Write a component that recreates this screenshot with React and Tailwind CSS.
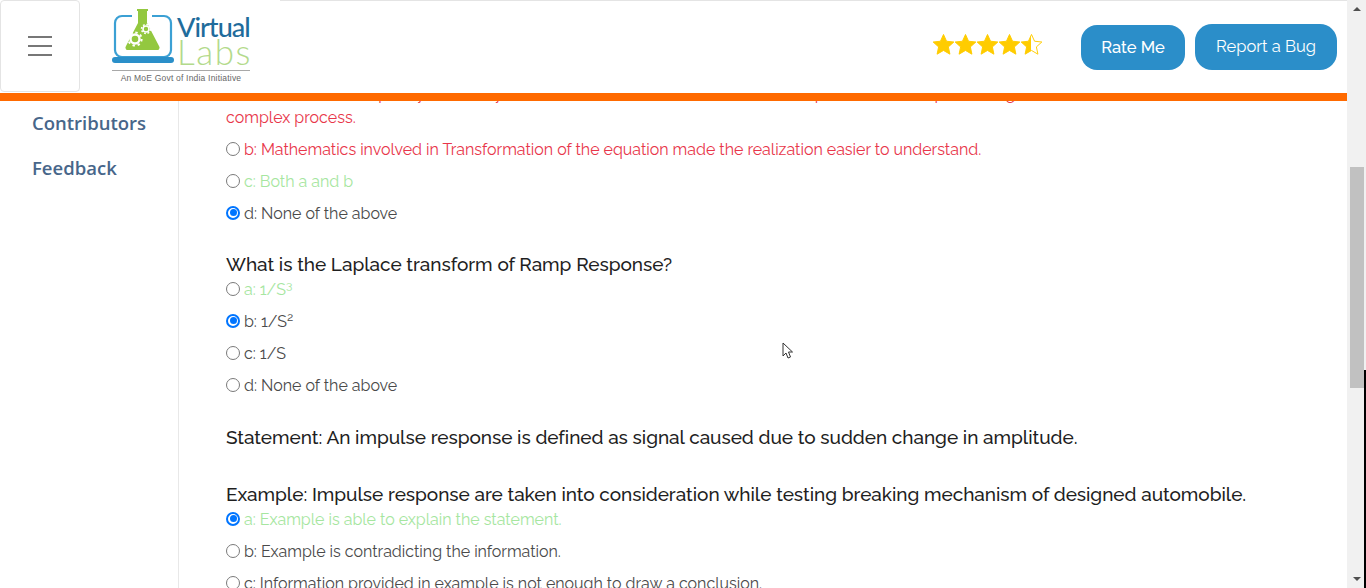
import React from "react";

const sans = "font-['Raleway','Lato','Open_Sans',sans-serif]";

const Radio = ({ checked }) => (
  <span
    className={`inline-block w-[14px] h-[14px] rounded-full shrink-0 mr-[4px] -mt-[3px] bg-white border ${
      checked ? "border-[#0075ff] border-2 p-[1.5px]" : "border-[#7a7a7a]"
    }`}
  >
    {checked && <span className="block w-full h-full rounded-full bg-[#0075ff]" />}
  </span>
);

const Option = ({ checked, color = "text-[#4a4a4a]", children }) => (
  <div className={`flex items-center h-[32px] text-[16px] tracking-[-0.02px] oldstyle-nums ${color}`}>
    <Radio checked={checked} />
    <span>{children}</span>
  </div>
);

const Question = ({ className, children }) => (
  <div className={`text-[19px] leading-[26px] tracking-[-0.05px] text-[#1f1f1f] font-medium ${className}`}>{children}</div>
);

const Star = ({ half }) => (
  <svg viewBox="0 0 24 24" className="w-[23px] h-[23px] -mx-[0.5px]">
    <defs>
      <linearGradient id="halfStar">
        <stop offset="50%" stopColor="#ffcc00" />
        <stop offset="50%" stopColor="#ffffff" />
      </linearGradient>
    </defs>
    <path
      d="M12 1.5l3.2 7.1 7.6.8-5.7 5.1 1.6 7.6L12 18.2l-6.7 3.9 1.6-7.6-5.7-5.1 7.6-.8z"
      fill={half ? "url(#halfStar)" : "#ffcc00"}
      stroke="#ffcc00"
      strokeWidth="1"
    />
  </svg>
);

const Logo = () => (
  <div className="w-[200px] shrink-0 pl-[32px] pt-[8px]">
    <div className="flex flex-col w-[138px]">
      <div className="flex items-start">
        <svg viewBox="0 0 66 56" className="w-[66px] h-[56px] shrink-0">
          <path d="M20 8H10a7 7 0 0 0-7 7v27a7 7 0 0 0 7 7h42a7 7 0 0 0 7-7V15a7 7 0 0 0-7-7H40" fill="none" stroke="#3ba0d4" strokeWidth="2.2" />
          <rect x="0" y="49" width="62" height="6" rx="3" fill="#2a8fc9" />
          <path d="M25 1h11v2h-1v12l12 23a2.5 2.5 0 0 1-2.5 4h-28a2.5 2.5 0 0 1-2.5-4l12-23V3h-1z" fill="#93c83f" />
          <circle cx="23" cy="31" r="4.5" fill="none" stroke="#fff" strokeWidth="2.4" />
          <circle cx="23" cy="31" r="6.6" fill="none" stroke="#fff" strokeWidth="2" strokeDasharray="2.4 2.8" />
          <circle cx="34" cy="21" r="3" fill="none" stroke="#fff" strokeWidth="1.6" />
          <circle cx="34" cy="21" r="4.5" fill="none" stroke="#fff" strokeWidth="1.5" strokeDasharray="1.8 1.7" />
        </svg>
        <div className="flex flex-col font-['Lato',sans-serif] -ml-[1px]">
          <span className="text-[27px] leading-[22px] mt-[8px] tracking-[-1px] text-[#1f6c9c] font-medium">Virtual</span>
          <span className="text-[35px] leading-[26px] text-[#b3da8b] font-light tracking-[1.5px]">Labs</span>
        </div>
      </div>
      <div className="border-t border-[#a8a8a8] mt-[6px] text-[8.5px] leading-[12px] text-center text-[#666] font-['Liberation_Sans',sans-serif] tracking-[0.2px] pt-[1px]">
        An MoE Govt of India Initiative
      </div>
    </div>
  </div>
);

export default function App() {
  return (
    <div className={`flex h-[588px] overflow-hidden bg-white ${sans}`}>
      <div className="flex-1 min-w-0 flex flex-col">
        <header className="h-[101px] shrink-0 flex border-b-8 border-[#ff6a00] relative z-10 bg-white">
          <button className="w-[80px] h-[92px] shrink-0 border border-[#e4e4e4] rounded-[4px] flex flex-col items-center justify-center gap-[7px]">
            <span className="block w-[24px] h-[2px] bg-[#777]" />
            <span className="block w-[24px] h-[2px] bg-[#777]" />
            <span className="block w-[24px] h-[2px] bg-[#777]" />
          </button>
          <Logo />
          <div className="flex-1 flex justify-end border-t border-[#e4e4e4]">
            <div className="flex items-center mr-[39px] mb-[5px]">
              <Star />
              <Star />
              <Star />
              <Star />
              <Star half />
            </div>
            <div className="flex items-start pt-[23px] pr-[10px] gap-[10px] text-white text-[16.5px]">
              <button className="mt-[1px] w-[104px] h-[45px] rounded-[16px] bg-[#2b8ec9] font-medium">Rate Me</button>
              <button className="w-[142px] h-[46px] pb-[2px] rounded-[17px] bg-[#2b8ec9]">Report a Bug</button>
            </div>
          </div>
        </header>
        <main className="flex-1 min-h-0 flex overflow-hidden">
          <aside className="w-[179px] shrink-0 border-r border-[#e8e8e8] pl-[32px] pt-[7px] font-['Open_Sans',sans-serif] font-semibold text-[18.5px] text-[#47668a]">
            <div className="leading-[30px]">Contributors</div>
            <div className="leading-[30px] mt-[15px]">Feedback</div>
          </aside>
          <section className="flex-1 min-w-0 pl-[47px] -mt-[19px] whitespace-nowrap">
            <div className="text-[16px] leading-[24px] text-[#e8364a] pl-[22px]">a: Transformation purely and easily reduces the time that is used to solve the problem and its processing of a</div>
            <div className="text-[16px] leading-[24px] text-[#e8364a] mb-[4px]">complex process.</div>
            <Option color="text-[#e8364a]">b: Mathematics involved in Transformation of the equation made the realization easier to understand.</Option>
            <Option color="text-[#a6e6a0]">c: Both a and b</Option>
            <Option checked>d: None of the above</Option>
            <Question className="mt-[21px] -mb-[3px]">What is the Laplace transform of Ramp Response?</Question>
            <Option color="text-[#a6e6a0]">a: 1/S<sup>3</sup></Option>
            <Option checked>b: 1/S<sup>2</sup></Option>
            <Option>c: 1/S</Option>
            <Option>d: None of the above</Option>
            <Question className="mt-[22px]">Statement: An impulse response is defined as signal caused due to sudden change in amplitude.</Question>
            <Question className="mt-[31px] -mb-[3px]">Example: Impulse response are taken into consideration while testing breaking mechanism of designed automobile.</Question>
            <Option checked color="text-[#a6e6a0]">a: Example is able to explain the statement.</Option>
            <Option>b: Example is contradicting the information.</Option>
            <Option>c: Information provided in example is not enough to draw a conclusion.</Option>
          </section>
        </main>
      </div>
      <div className="w-[19px] shrink-0 bg-[#f1f1f1] flex flex-col items-center relative">
        <span className="mt-[7px] w-0 h-0 border-x-[4px] border-x-transparent border-b-[4px] border-b-[#505050]" />
        <div className="mt-[156px] w-[14px] h-[221px] bg-[#c1c1c1]" />
        <div className="flex-1" />
        <span className="mb-[7px] w-0 h-0 border-x-[4px] border-x-transparent border-t-[4px] border-t-[#505050]" />
        <div className="absolute right-0 top-[370px] bottom-0 w-[2px] bg-black" />
      </div>
      <svg viewBox="0 0 12 18" className="absolute left-[782px] top-[342px] w-[12px] h-[18px]">
        <path d="M1 1v13l3-3 2 5 2.5-1-2-5h4z" fill="#fff" stroke="#333" strokeWidth="1" />
      </svg>
    </div>
  );
}
